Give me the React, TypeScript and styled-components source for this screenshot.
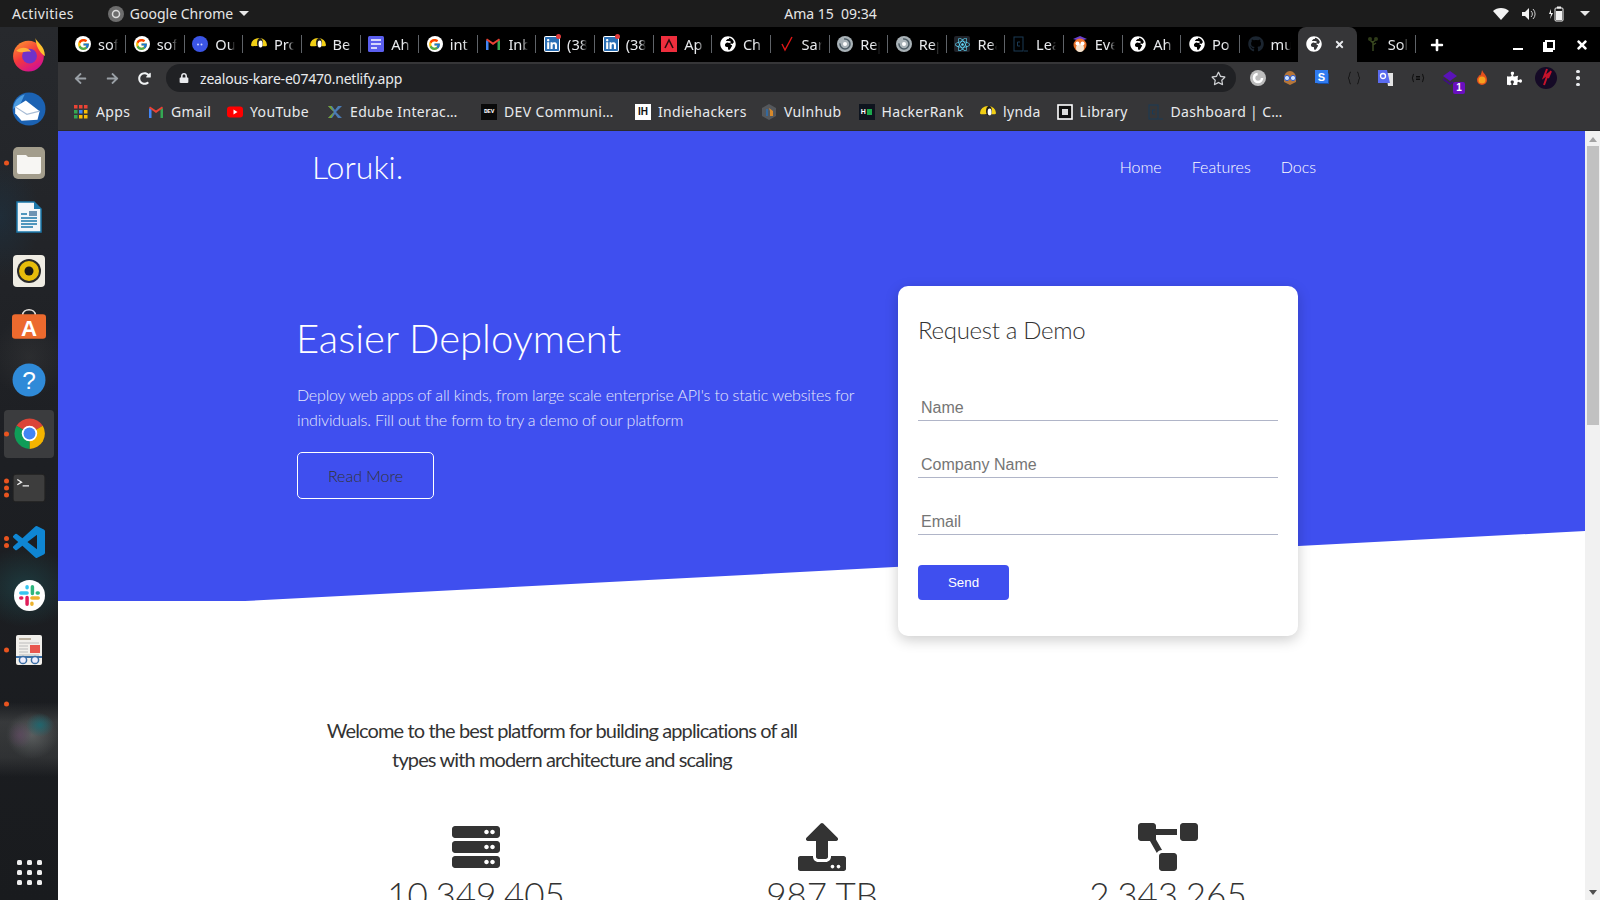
import React from "react";
import styled, { createGlobalStyle } from "styled-components";
import { FcGoogle } from "react-icons/fc";
import { FaServer, FaUpload, FaProjectDiagram, FaLinkedin, FaGlobeAfrica, FaReact, FaGithub, FaPuzzlePiece, FaRegStar, FaLock, FaArrowLeft, FaArrowRight, FaRedoAlt, FaPlus, FaTimes } from "react-icons/fa";

const Global = createGlobalStyle`
  html, body { margin: 0; padding: 0; background: #fff; }
  * { box-sizing: border-box; }
`;

const UI = `"Noto Sans", "Open Sans", sans-serif`;
const LATO = `Lato, "Open Sans", sans-serif`;
const BLUE = "#3f4fef";
const CHROME_GREY = "#363638";

const Desktop = styled.div`
  width: 1600px; height: 900px; overflow: hidden;
  display: grid; grid-template-rows: 27px 873px; grid-template-columns: 58px 1542px;
`;
const TopBar = styled.header`
  grid-column: 1 / 3; background: #1c1c1c; color: #e6e6e6;
  display: grid; grid-template-columns: 1fr auto 1fr; align-items: center;
  font: 14px ${UI}; padding-left: 12px;
`;
const TopLeft = styled.div`display: flex; align-items: center;`;
const Activities = styled.span`letter-spacing: 0.35px;`;
const AppMenu = styled.div`display: flex; align-items: center; gap: 6px; margin-left: 34px;`;
const Clock = styled.div`margin-left: 49px; white-space: pre;`;
const TopRight = styled.div`display: flex; justify-content: flex-end; align-items: center; gap: 12px; padding-right: 10px;`;
const Caret = styled.span`
  width: 0; height: 0; border-left: 5px solid transparent; border-right: 5px solid transparent;
  border-top: 5px solid #e6e6e6; display: block;
`;
const TrayCaret = styled(Caret)`margin-left: 3px;`;

const Dock = styled.nav`
  background:
    radial-gradient(ellipse 14px 12px at 40px 698px, rgba(20,110,120,.75), transparent),
    radial-gradient(ellipse 12px 14px at 20px 708px, rgba(110,70,110,.45), transparent),
    radial-gradient(ellipse 26px 24px at 32px 708px, rgba(120,125,125,.55), transparent),
    linear-gradient(transparent 675px, rgba(90,92,92,.45) 695px, rgba(80,82,82,.4) 730px, transparent 750px),
    radial-gradient(ellipse 50px 40px at 25px 560px, rgba(30,80,85,.55), transparent),
    radial-gradient(ellipse 40px 60px at 0px 190px, rgba(25,60,85,.35), transparent),
    radial-gradient(ellipse 40px 40px at 30px 330px, rgba(70,70,70,.3), transparent),
    linear-gradient(#27292d, #1d1f23 50%, #191b1e);
  display: flex; flex-direction: column; padding-top: 1px; padding-bottom: 4px;
`;
const DockItem = styled.div`
  height: 54.1px; flex: none; position: relative; display: flex; align-items: center; justify-content: center;
`;
const DockTile = styled.div<{ $active?: boolean }>`
  width: 50px; height: 48px; border-radius: 4px; display: flex; align-items: center; justify-content: center;
  background: ${(p) => (p.$active ? "#3b3c3e" : "transparent")};
`;
const Pips = styled.div`
  position: absolute; left: 4px; top: 50%; transform: translateY(-50%);
  display: flex; flex-direction: column; gap: 2px;
`;
const Pip = styled.i`display: block; width: 5px; height: 5px; border-radius: 50%; background: #e9541f;`;
const DockBottom = styled(DockItem)`margin-top: auto; height: 48px;`;
const GridDots = styled.div`display: grid; grid-template-columns: repeat(3, 5px); gap: 5px;`;
const GridDot = styled.i`display: block; width: 5px; height: 5px; border-radius: 1.5px; background: #eee;`;

const Browser = styled.main`display: grid; grid-template-rows: 35px 32px 37px 769px; min-width: 0;`;
const TabStrip = styled.div`background: #000; display: flex; align-items: stretch; padding-left: 9px; padding-right: 11px;`;
const Tab = styled.div<{ $active?: boolean }>`
  width: 58.64px; flex: none; display: flex; align-items: center; padding: 0 0 1px 8px;
  color: #e8eaed; font: 14.6px ${UI};
  background: ${(p) => (p.$active ? CHROME_GREY : "transparent")};
  border-radius: ${(p) => (p.$active ? "8px 8px 0 0" : "0")};
`;
const Fav = styled.span`width: 16px; height: 16px; flex: none; display: flex; align-items: center; justify-content: center;`;
const GBadge = styled(Fav)`background: #fff; border-radius: 50%;`;
const TabTitle = styled.span`
  margin-left: 7px; width: 20px; flex: none; overflow: hidden; white-space: nowrap;
  -webkit-mask-image: linear-gradient(90deg, #000 70%, transparent);
  mask-image: linear-gradient(90deg, #000 70%, transparent);
`;
const TabSep = styled.span`width: 1px; height: 18px; margin-left: 7px; background: #5f6368; flex: none;`;
const TabClose = styled.span`margin-left: 12px; color: #e8eaed; display: flex;`;
const NewTab = styled.span`margin-left: 15px; align-self: center; color: #fff; display: flex;`;
const WindowControls = styled.div`margin-left: auto; display: flex; align-items: center; gap: 18px; color: #fff;`;
const Ctl = styled.span`width: 14px; height: 14px; display: flex; align-items: center; justify-content: center;`;
const MinBar = styled.i`display: block; width: 10px; height: 2px; background: #fff; margin-top: 8px;`;
const RestoreIcon = styled.i`
  display: block; width: 10px; height: 10px; border: 2px solid #fff; box-shadow: -2px 2px 0 0 #fff; background: #000;
`;

const Toolbar = styled.div`background: ${CHROME_GREY}; display: flex; align-items: center; padding-left: 6px;`;
const ToolBtn = styled.span<{ $dim?: boolean }>`
  width: 32px; height: 32px; flex: none; display: flex; align-items: center; justify-content: center;
  color: ${(p) => (p.$dim ? "#9aa0a6" : "#f1f3f4")};
`;
const Omnibox = styled.div`
  width: 1070px; height: 28px; margin-left: 6px; flex: none; border-radius: 14px; background: #202124;
  display: flex; align-items: center; padding: 0 10px 0 13px; color: #e8eaed; font: 14px ${UI};
`;
const Url = styled.span`margin-left: 11px; letter-spacing: -0.2px;`;
const StarBtn = styled.span`margin-left: auto; color: #cfd1d4; display: flex;`;
const Extensions = styled.div`display: flex; margin-left: 6px;`;
const ExtBadge = styled.span`
  position: absolute; right: 1px; bottom: 0; width: 12px; height: 12px; border-radius: 2px;
  background: #6a0fc0; color: #fff; font: bold 10px/12px "Liberation Sans", sans-serif; text-align: center;
`;
const ExtBtn = styled(ToolBtn)`position: relative;`;
const MoreDots = styled.div`display: flex; flex-direction: column; gap: 3px;`;
const MoreDot = styled.i`display: block; width: 3.5px; height: 3.5px; border-radius: 50%; background: #e8eaed;`;

const BookmarkBar = styled.div`
  background: ${CHROME_GREY}; display: flex; align-items: center; padding-left: 15px; padding-bottom: 1px;
  border-bottom: 1px solid #2b2b2e;
`;
const Bookmark = styled.div<{ $w: number }>`
  width: ${(p) => p.$w}px; flex: none; display: flex; align-items: center; gap: 7px;
  color: #e8eaed; font: 14px ${UI}; white-space: nowrap; letter-spacing: 0.35px;
`;

const Viewport = styled.div`display: flex; min-height: 0; overflow: hidden;`;
const Page = styled.div`
  width: 1527px; flex: none; position: relative; overflow: hidden; background: #fff; color: #333;
  font-family: ${LATO}; font-weight: 300;
`;
const Backdrop = styled.div`
  position: absolute; left: 0; top: 0; right: 0; height: 470px; background: ${BLUE};
  clip-path: polygon(0 0, 100% 0, 100% 400px, 187px 470px, 0 470px);
`;
const PageHeader = styled.header`
  position: relative; height: 71px; display: flex; align-items: center; justify-content: space-between;
  padding: 0 269px 0 254px; color: #fff;
`;
const Brand = styled.div`font-size: 32px; font-weight: 300;`;
const NavLinks = styled.nav`display: flex; gap: 30px; font-size: 16px;`;
const NavLink = styled.a`color: #fff;`;
const Hero = styled.section`
  position: relative; display: grid; grid-template-columns: 601px 400px; margin-top: 84px; padding-left: 239px;
`;
const HeroText = styled.div`padding-top: 28px; color: #fff;`;
const HeroTitle = styled.h1`margin: 0 0 0 -1px; font-size: 40px; font-weight: 300; line-height: 48px;`;
const HeroLead = styled.p`
  margin: 20px 0 0; width: 570px; font-size: 16px; line-height: 25px; color: #e6e8fc; letter-spacing: -0.17px;
`;
const ReadMore = styled.a`
  margin-top: 20px; display: flex; align-items: center; justify-content: center; width: 137px; height: 47px;
  border: 1px solid #fff; border-radius: 5px; color: #333; font-size: 16px;
`;
const Card = styled.form`
  width: 400px; height: 350px; background: #fff; border-radius: 10px; padding: 29px 20px 0 20px;
  box-shadow: 0 4px 14px rgba(0, 0, 0, .2); display: flex; flex-direction: column;
`;
const CardTitle = styled.h2`margin: 0 0 48px; font-size: 24px; font-weight: 300; line-height: 29px; color: #333; letter-spacing: -0.3px;`;
const Field = styled.input`
  display: block; width: 360px; height: 29px; flex: none; margin-bottom: 28px; padding: 4px 3px 0;
  border: 0; border-bottom: 1px solid #b0b5c8; outline: 0; background: transparent;
  font: 16px "Liberation Sans", Arial, sans-serif;
  &::placeholder { color: #757575; opacity: 1; }
`;
const Send = styled.button`
  width: 91px; height: 35px; margin-top: 2px; border: 0; border-radius: 4px; background: ${BLUE}; color: #fff;
  font: 13.33px "Liberation Sans", Arial, sans-serif;
`;
const Welcome = styled.p`
  position: relative; margin: 80px 0 0 254px; width: 500px; text-align: center;
  font-size: 20px; line-height: 29px; font-weight: 400; color: #333; letter-spacing: -0.88px;
`;
const Stats = styled.section`
  display: grid; grid-template-columns: repeat(3, 346px); margin-top: 49px; padding-left: 245px;
`;
const Stat = styled.div`
  display: flex; flex-direction: column; align-items: center; color: #333;
  svg { height: 48px; width: 48px; display: block; }
`;
const DiagramIcon = styled(FaProjectDiagram)`&& { width: 60px; }`;
const StatValue = styled.div`margin-top: 2px; font-size: 35px; line-height: 42px; font-weight: 300; white-space: nowrap;`;

const Scrollbar = styled.aside`
  width: 15px; flex: none; background: #f1f1f1; display: flex; flex-direction: column; align-items: center;
`;
const ScrollUp = styled.i`
  display: block; width: 0; height: 0; margin: 6px 0 0; border-left: 4px solid transparent; border-right: 4px solid transparent;
  border-bottom: 5px solid #a3a3a3;
`;
const Thumb = styled.div`width: 12px; height: 279px; margin-top: 4px; background: #c1c1c1;`;
const ScrollDown = styled.i`
  display: block; width: 0; height: 0; margin: auto 0 5px; border-left: 4px solid transparent; border-right: 4px solid transparent;
  border-top: 5px solid #505050;
`;

/* ---------- small pictures ---------- */
const Svg: React.FC<{ s?: number; v?: number; children: React.ReactNode }> = ({ s = 16, v = 16, children }) => (
  <svg width={s} height={s} viewBox={`0 0 ${v} ${v}`}>{children}</svg>
);
const GFav = () => <GBadge><FcGoogle size={13} /></GBadge>;
const BlueFav = () => <Svg><circle cx="8" cy="8" r="8" fill="#3b55e6" /><circle cx="6" cy="8.5" r="1" fill="#cfd6ff" /><circle cx="9.5" cy="8.5" r="1" fill="#cfd6ff" /></Svg>;
const BirdFav = () => <Svg><path d="M0 9a8 7 0 0 1 16 0c0 2-3 1-8 1s-8 1-8-1z" fill="#f2cf14" /><ellipse cx="9" cy="7" rx="3" ry="5" fill="#1b1b1b" /><ellipse cx="9.6" cy="8" rx="2" ry="3.4" fill="#fff" /></Svg>;
const DocFav = () => <Svg><rect width="16" height="16" rx="1.5" fill="#5b5fef" /><path d="M3 4h10M3 8h10M3 12h6" stroke="#fff" strokeWidth="1.6" /></Svg>;
const GmailFav = () => <Svg><path d="M1 14V4l2.500 1.500V14z" fill="#4285f4" /><path d="M15 14V4l-2.500 1.500V14z" fill="#34a853" /><path d="M1 4l7 5 7-5-1-1.500L8 6.500 2 2.500z" fill="#ea4335" /></Svg>;
const DotWrap = styled.span`position: relative; display: flex; width: 16px; height: 16px; background: #fff; border-radius: 2px;`;
const RedDot = styled.i`position: absolute; right: -1px; top: -2px; width: 5px; height: 5px; border-radius: 50%; background: #e23b3b;`;
const InFav = () => <DotWrap><FaLinkedin size={16} color="#2a6fb5" /><RedDot /></DotWrap>;
const AdobeFav = () => <Svg><rect width="16" height="16" fill="#ee2e3d" /><path d="M4 12l4-8 4 8" fill="none" stroke="#2a0a0d" strokeWidth="1.6" /></Svg>;
const GlobeBadge = styled(Fav)`color: #fff;`;
const GlobeFav = () => <GlobeBadge><FaGlobeAfrica size={16} /></GlobeBadge>;
const CheckFav = () => <Svg><path d="M3 8l3 6 7-13" fill="none" stroke="#e01616" strokeWidth="1.4" /></Svg>;
const SwirlFav = () => <Svg><circle cx="8" cy="8" r="8" fill="#a9b2b7" /><circle cx="8" cy="8" r="5" fill="none" stroke="#4b5a63" strokeWidth="1.5" strokeDasharray="16 6" /><circle cx="8" cy="8" r="2" fill="#fff" /></Svg>;
const ReactBadge = styled(Fav)`background: #20232a; border-radius: 2px;`;
const ReactFav = () => <ReactBadge><FaReact size={15} color="#61dafb" /></ReactBadge>;
const CodeFav = () => <Svg><rect x="1" y="1" width="9" height="14" fill="none" stroke="#1a3a55" strokeWidth="1" /><path d="M7 6H4.500v4H7M11 15h4" stroke="#1a3a55" fill="none" /></Svg>;
const OwlFav = () => <Svg><path d="M1 3l7-3 7 3-7 2z" fill="#6a3fd0" /><circle cx="8" cy="9" r="6.500" fill="#e8732c" /><circle cx="8" cy="12" r="4" fill="#f6e4cf" /><circle cx="5.500" cy="7.500" r="2" fill="#fff" /><circle cx="10.500" cy="7.500" r="2" fill="#fff" /></Svg>;
const GitBadge = styled(Fav)`color: #1b2530;`;
const GitFav = () => <GitBadge><FaGithub size={16} /></GitBadge>;
const TreeFav = () => <Svg><path d="M8 15V5M8 7L4 3M8 6l4-3M8 9l3-2" stroke="#3a4a20" strokeWidth="1.5" fill="none" /><circle cx="5" cy="3" r="2" fill="#2e3a18" /><circle cx="11" cy="3" r="2" fill="#2e3a18" /></Svg>;

const tabs: [React.FC, string][] = [
  [GFav, "sof"], [GFav, "sof"], [BlueFav, "Ou"], [BirdFav, "Pro"], [BirdFav, "Be"], [DocFav, "Ah"], [GFav, "int"],
  [GmailFav, "Inb"], [InFav, "(38"], [InFav, "(38"], [AdobeFav, "Ap"], [GlobeFav, "Ch"], [CheckFav, "Sar"],
  [SwirlFav, "Rep"], [SwirlFav, "Rep"], [ReactFav, "Rea"], [CodeFav, "Lea"], [OwlFav, "Eve"], [GlobeFav, "Ah"],
  [GlobeFav, "Po"], [GitFav, "mu"],
];

const AppsIcon = () => (
  <Svg>
    {[0, 5, 10].map((y, r) => [0, 5, 10].map((x, c) => (
      <rect key={`${r}${c}`} x={x + 1} y={y + 1} width="3.500" height="3.500"
        fill={[["#ea4335", "#ea4335", "#ea4335"], ["#34a853", "#4285f4", "#fbbc05"], ["#34a853", "#fbbc05", "#fbbc05"]][r][c]} />
    )))}
  </Svg>
);
const YtIcon = () => <Svg><rect y="2.500" width="16" height="11" rx="3" fill="#f00" /><path d="M6.500 5.500v5l4-2.500z" fill="#fff" /></Svg>;
const EdubeIcon = () => <Svg><path d="M1 2l6 6-6 6h4l3-4 3 4h4L9 8l6-6h-4L8 6 5 2z" fill="#4a7bb5" /><path d="M1 2l6 6-6 6h3l3-6-3-6z" fill="#7aa52c" /></Svg>;
const DevBadge = styled.span`width: 16px; height: 16px; background: #0a0a0a; color: #fff; font: bold 6px/16px "Liberation Mono", monospace; text-align: center; letter-spacing: -.3px;`;
const IhBadge = styled.span`width: 16px; height: 16px; background: #fff; color: #111; font: bold 10px/16px "Liberation Sans", sans-serif; text-align: center; letter-spacing: 0;`;
const DevIcon = () => <DevBadge>DEV</DevBadge>;
const IhIcon = () => <IhBadge>IH</IhBadge>;
const VulnIcon = () => <Svg><path d="M8 0l7 4v8l-7 4-7-4V4z" fill="#55585c" /><path d="M8 4l4 3v5H9V7z" fill="#d98a2b" /><path d="M6 5v7" stroke="#2a6fb5" strokeWidth="1.500" /></Svg>;
const HrBadge = styled.span`width: 16px; height: 16px; background: #0e141e; display: flex; align-items: center; justify-content: center; gap: 1px;`;
const HrH = styled.span`color: #fff; font: bold 7px/8px "Liberation Sans", sans-serif;`;
const HrBar = styled.i`display: block; width: 5px; height: 6px; background: #1ba94c;`;
const HrIcon = () => <HrBadge><HrH>H</HrH><HrBar /></HrBadge>;
const LibIcon = () => <Svg><rect x="1" y="1" width="14" height="14" fill="#111" stroke="#fff" strokeWidth="1.600" /><rect x="5" y="5" width="6" height="6" fill="#ddd" /></Svg>;

const bookmarks: [React.FC, string, number][] = [
  [AppsIcon, "Apps", 75], [GmailFav, "Gmail", 79], [YtIcon, "YouTube", 100], [EdubeIcon, "Edube Interac…", 154],
  [DevIcon, "DEV Communi…", 154], [IhIcon, "Indiehackers", 126], [VulnIcon, "Vulnhub", 97.5], [HrIcon, "HackerRank", 121.5],
  [BirdFav, "lynda", 76.5], [LibIcon, "Library", 91], [CodeFav, "Dashboard | C…", 140],
];

const Ext1 = () => <Svg><circle cx="8" cy="8" r="8" fill="#bdbdbd" /><circle cx="8" cy="8" r="4" fill="none" stroke="#fff" strokeWidth="2.500" strokeDasharray="18 7" /></Svg>;
const Ext2 = () => <Svg><path d="M2 8a6 7 0 0 1 12 0v4l-6 3-6-3z" fill="#b5763a" /><circle cx="5" cy="8" r="2.600" fill="#cfe3ff" stroke="#2b5bd0" /><circle cx="11" cy="8" r="2.600" fill="#cfe3ff" stroke="#2b5bd0" /></Svg>;
const Ext3 = () => <Svg><path d="M3 14h12V3z" fill="#174fa8" /><rect x="1" width="13" height="13" fill="#2f7bf0" /><text x="7.500" y="11" textAnchor="middle" fontSize="11" fontWeight="700" fontFamily="Liberation Sans" fill="#fff">S</text></Svg>;
const Ext4 = () => <Svg><path d="M5 2C3 2 4 7 2 8c2 1 1 6 3 6M11 2c2 0 1 5 3 6-2 1-1 6-3 6" fill="none" stroke="#111" strokeWidth="1" /></Svg>;
const Ext5 = () => <Svg><path d="M8 3h7v13H10z" fill="#e4e4e4" /><path d="M0 0h9l3 13H0z" fill="#5a6bf0" /><circle cx="5" cy="6" r="2.500" fill="none" stroke="#fff" strokeWidth="1.300" /></Svg>;
const Ext6 = () => <Svg><path d="M4 4C2.500 4 3.500 7.500 2 8c1.500.5.5 4 2 4M12 4c1.500 0 .5 3.500 2 4-1.500.5-.5 4-2 4M6 6.500h4M6 8h4M6 9.500h4" fill="none" stroke="#0c0c0c" strokeWidth="1" /></Svg>;
const Ext7 = () => <Svg><path d="M8 1l7 5-7 5-7-5z" fill="#5a13b8" /><path d="M1 8l7 5 3-2v2l-3 2-7-5z" fill="#3f0e84" /></Svg>;
const Ext8 = () => <Svg><path d="M8 0c1 3 5 5 5 10a5 5 0 0 1-10 0c0-3 2-3 2-5 1 1 2 1 3-5z" fill="#e5501c" /><circle cx="8" cy="10" r="3.500" fill="#f5a21f" /></Svg>;
const Avatar = () => <Svg s={22} v={22}><circle cx="11" cy="11" r="11" fill="#150a26" /><path d="M12 2l-3 8 4-3-4 11M16 4l-3 7" stroke="#c5122b" strokeWidth="2" fill="none" /></Svg>;

const FireFox = () => (
  <Svg s={34} v={32}>
    <defs><linearGradient id="ff" x1="0" y1="0" x2=".6" y2="1"><stop offset="0" stopColor="#ffa02e" /><stop offset=".55" stopColor="#f5383c" /><stop offset="1" stopColor="#d3128f" /></linearGradient></defs>
    <circle cx="15.500" cy="17" r="14.500" fill="url(#ff)" />
    <path d="M22 0c1 4 9 7 9 17-3-2-8-6-9-17z" fill="#ffc02e" />
    <circle cx="16.500" cy="17" r="7" fill="#7132c9" />
    <path d="M4 12c4-4 11-4 14 1-4-1-9 2-14-1z" fill="#ffb13b" />
  </Svg>
);
const Bird = () => (
  <Svg s={34} v={32}>
    <circle cx="16" cy="16" r="15.500" fill="#1b62b3" />
    <path d="M1 16A15 15 0 0 1 12 2l-4 9z" fill="#4b9be0" />
    <path d="M3 14l10-6 13 10-2 8-15 1-6-7z" fill="#fff" /><path d="M3 14l11 7 12-3" fill="none" stroke="#a9bdd6" />
  </Svg>
);
const Files = () => (
  <Svg s={32} v={32}>
    <rect width="32" height="32" rx="5" fill="#a39d8c" />
    <path d="M4 8h9l2 2h13v15a2 2 0 0 1-2 2H6a2 2 0 0 1-2-2z" fill="#f7f6f3" />
  </Svg>
);
const Writer = () => (
  <Svg s={32} v={32}>
    <path d="M4 1h17l7 7v23H4z" fill="#f2f6f9" stroke="#1b78ab" strokeWidth="1.500" />
    <path d="M21 1l7 7h-7z" fill="#1b78ab" />
    <path d="M8 13h6M8 17h16M8 20h16M8 23h16M8 26h12" stroke="#1b78ab" strokeWidth="1.500" />
    <rect x="16" y="10" width="8" height="5" fill="#6f94b3" />
  </Svg>
);
const Rhythm = () => (
  <Svg s={32} v={32}>
    <rect width="32" height="32" rx="4" fill="#efece3" />
    <circle cx="16" cy="16" r="12" fill="#2a2a2a" /><circle cx="16" cy="16" r="10" fill="#e7bc0b" /><circle cx="16" cy="16" r="4.500" fill="#1a1a1a" />
  </Svg>
);
const Store = () => (
  <Svg s={34} v={32}>
    <path d="M10 6c0-7 12-7 12 0" fill="none" stroke="#e8e4df" strokeWidth="1.500" />
    <rect x="0" y="5" width="32" height="23" rx="3" fill="#ec6a2e" />
    <text x="16" y="25" textAnchor="middle" fontSize="21" fontWeight="700" fontFamily="Liberation Sans" fill="#fff">A</text>
  </Svg>
);
const Help = () => (
  <Svg s={34} v={32}>
    <circle cx="16" cy="16" r="15.500" fill="#2f8ad8" />
    <text x="16" y="24" textAnchor="middle" fontSize="23" fontFamily="Liberation Sans" fill="#fff">?</text>
  </Svg>
);
const Chrome = () => (
  <Svg s={33} v={32}>
    <path d="M16 16L3.400 8.500A15 15 0 0 1 28.900 8.500z" fill="#db4437" />
    <path d="M16 16L28.900 8.500A15 15 0 0 1 16 31z" fill="#f4b400" />
    <path d="M16 16L16 31A15 15 0 0 1 3.400 8.500z" fill="#0f9d58" />
    <circle cx="16" cy="16" r="7.500" fill="#fff" /><circle cx="16" cy="16" r="5.800" fill="#4285f4" />
  </Svg>
);
const Terminal = () => (
  <Svg s={34} v={32}>
    <rect x="1" y="3" width="30" height="26" rx="3" fill="#3d3d3d" stroke="#222" />
    <path d="M5 8l4 2.500-4 2.500M10 14h6" fill="none" stroke="#f2f2f2" strokeWidth="1.200" />
  </Svg>
);
const VSCode = () => (
  <Svg s={32} v={24}>
    <path fill="#0f86d3" d="M23.15 2.587L18.21.21a1.494 1.494 0 0 0-1.705.29l-9.46 8.63-4.12-3.128a.999.999 0 0 0-1.276.057L.327 7.261A1 1 0 0 0 .326 8.74L3.899 12 .326 15.26a1 1 0 0 0 .001 1.479L1.65 17.94a.999.999 0 0 0 1.276.057l4.12-3.128 9.46 8.63a1.492 1.492 0 0 0 1.704.29l4.942-2.377A1.5 1.5 0 0 0 24 20.06V3.939a1.5 1.5 0 0 0-.85-1.352zm-5.146 14.861L10.826 12l7.178-5.448v10.896z" />
  </Svg>
);
const Slack = () => (
  <Svg s={31} v={32}>
    <circle cx="16" cy="16" r="16" fill="#fff" />
    <g strokeWidth="3.600" strokeLinecap="round" fill="none">
      <path d="M13.500 7v1M7 13.500h6.500" stroke="#36c5f0" /><path d="M19 7v7M25 13.500h-1" stroke="#2eb67d" />
      <path d="M18.500 25v-1M25 18.500h-6.500" stroke="#ecb22e" /><path d="M7 18.500h1M13.500 18v7" stroke="#e01e5a" />
    </g>
  </Svg>
);
const Reader = () => (
  <Svg s={32} v={32}>
    <rect x="3" y="1" width="26" height="30" rx="2" fill="#f1efeb" />
    <path d="M6 5h12" stroke="#a89d86" strokeWidth="1.500" /><path d="M6 9h20M6 12h9M6 15h9M6 18h9M6 21h20" stroke="#bbb" />
    <rect x="17" y="11" width="10" height="8" fill="#e8564d" />
    <path d="M3 23h26" stroke="#3b6ea5" strokeWidth="2" />
    <circle cx="10" cy="26" r="3.600" fill="#eef" stroke="#3b6ea5" strokeWidth="1.500" /><circle cx="22" cy="26" r="3.600" fill="#eef" stroke="#3b6ea5" strokeWidth="1.500" />
  </Svg>
);
const dockApps: [React.FC, number, boolean?][] = [
  [FireFox, 0], [Bird, 0], [Files, 1], [Writer, 0], [Rhythm, 0], [Store, 0], [Help, 0], [Chrome, 1, true],
  [Terminal, 3], [VSCode, 2], [Slack, 0], [Reader, 1],
];

const Wifi = () => <Svg><path d="M8 14L0 5c4-4 12-4 16 0z" fill="#f2f2f2" /></Svg>;
const Volume = () => <Svg><path d="M1 6h3l4-4v12l-4-4H1z" fill="#f2f2f2" /><path d="M10 5a4 4 0 0 1 0 6M12 3a7 7 0 0 1 0 10" fill="none" stroke="#cfcfcf" /></Svg>;
const Battery = () => <Svg><path d="M2 3L0 8h2l-1 5 3-6H2z" fill="#f2f2f2" /><rect x="6" y="2" width="8" height="13" rx="1" fill="none" stroke="#f2f2f2" /><rect x="7" y="5" width="6" height="9" fill="#f2f2f2" /><rect x="8" y="0.500" width="4" height="2" fill="#f2f2f2" /></Svg>;
const ChromeMini = () => <Svg><circle cx="8" cy="8" r="8" fill="#6d6d6d" /><circle cx="8" cy="8" r="3.500" fill="none" stroke="#ddd" strokeWidth="1.500" /></Svg>;

export default function App() {
  return (
    <>
      <Global />
      <Desktop>
        <TopBar>
          <TopLeft>
            <Activities>Activities</Activities>
            <AppMenu><ChromeMini /><span>Google Chrome</span><Caret /></AppMenu>
          </TopLeft>
          <Clock>Ama 15  09:34</Clock>
          <TopRight><Wifi /><Volume /><Battery /><TrayCaret /></TopRight>
        </TopBar>

        <Dock>
          {dockApps.map(([Icon, pips, active], i) => (
            <DockItem key={i}>
              {pips > 0 && <Pips>{Array.from({ length: pips }).map((_, k) => <Pip key={k} />)}</Pips>}
              <DockTile $active={active}><Icon /></DockTile>
            </DockItem>
          ))}
          <DockItem><Pips><Pip /></Pips></DockItem>
          <DockBottom>
            <GridDots>{Array.from({ length: 9 }).map((_, k) => <GridDot key={k} />)}</GridDots>
          </DockBottom>
        </Dock>

        <Browser>
          <TabStrip>
            {tabs.map(([Icon, title], i) => (
              <Tab key={i}>
                <Fav><Icon /></Fav>
                <TabTitle>{title}</TabTitle>
                <TabSep />
              </Tab>
            ))}
            <Tab $active>
              <Fav><GlobeFav /></Fav>
              <TabClose><FaTimes size={11} /></TabClose>
            </Tab>
            <Tab>
              <Fav><TreeFav /></Fav>
              <TabTitle>Sol</TabTitle>
              <TabSep />
            </Tab>
            <NewTab><FaPlus size={14} /></NewTab>
            <WindowControls>
              <Ctl><MinBar /></Ctl>
              <Ctl><RestoreIcon /></Ctl>
              <Ctl><FaTimes size={14} /></Ctl>
            </WindowControls>
          </TabStrip>

          <Toolbar>
            <ToolBtn $dim><FaArrowLeft size={13} /></ToolBtn>
            <ToolBtn $dim><FaArrowRight size={13} /></ToolBtn>
            <ToolBtn><FaRedoAlt size={13} /></ToolBtn>
            <Omnibox>
              <FaLock size={10} />
              <Url>zealous-kare-e07470.netlify.app</Url>
              <StarBtn><FaRegStar size={15} /></StarBtn>
            </Omnibox>
            <Extensions>
              <ToolBtn><Ext1 /></ToolBtn>
              <ToolBtn><Ext2 /></ToolBtn>
              <ToolBtn><Ext3 /></ToolBtn>
              <ToolBtn><Ext4 /></ToolBtn>
              <ToolBtn><Ext5 /></ToolBtn>
              <ToolBtn><Ext6 /></ToolBtn>
              <ExtBtn><Ext7 /><ExtBadge>1</ExtBadge></ExtBtn>
              <ToolBtn><Ext8 /></ToolBtn>
              <ToolBtn><FaPuzzlePiece size={15} color="#fff" /></ToolBtn>
              <ToolBtn><Avatar /></ToolBtn>
              <ToolBtn><MoreDots><MoreDot /><MoreDot /><MoreDot /></MoreDots></ToolBtn>
            </Extensions>
          </Toolbar>

          <BookmarkBar>
            {bookmarks.map(([Icon, label, w]) => (
              <Bookmark key={label} $w={w}><Icon /><span>{label}</span></Bookmark>
            ))}
          </BookmarkBar>

          <Viewport>
            <Page>
              <Backdrop />
              <PageHeader>
                <Brand>Loruki.</Brand>
                <NavLinks>
                  <NavLink>Home</NavLink>
                  <NavLink>Features</NavLink>
                  <NavLink>Docs</NavLink>
                </NavLinks>
              </PageHeader>
              <Hero>
                <HeroText>
                  <HeroTitle>Easier Deployment</HeroTitle>
                  <HeroLead>
                    Deploy web apps of all kinds, from large scale enterprise API's to static websites for individuals. Fill out the form to try a demo of our platform
                  </HeroLead>
                  <ReadMore>Read More</ReadMore>
                </HeroText>
                <Card>
                  <CardTitle>Request a Demo</CardTitle>
                  <Field placeholder="Name" />
                  <Field placeholder="Company Name" />
                  <Field placeholder="Email" />
                  <Send type="button">Send</Send>
                </Card>
              </Hero>
              <Welcome>Welcome to the best platform for building applications of all types with modern architecture and scaling</Welcome>
              <Stats>
                <Stat><FaServer /><StatValue>10,349,405</StatValue></Stat>
                <Stat><FaUpload /><StatValue>987 TB</StatValue></Stat>
                <Stat><DiagramIcon /><StatValue>2,343,265</StatValue></Stat>
              </Stats>
            </Page>
            <Scrollbar><ScrollUp /><Thumb /><ScrollDown /></Scrollbar>
          </Viewport>
        </Browser>
      </Desktop>
    </>
  );
}
